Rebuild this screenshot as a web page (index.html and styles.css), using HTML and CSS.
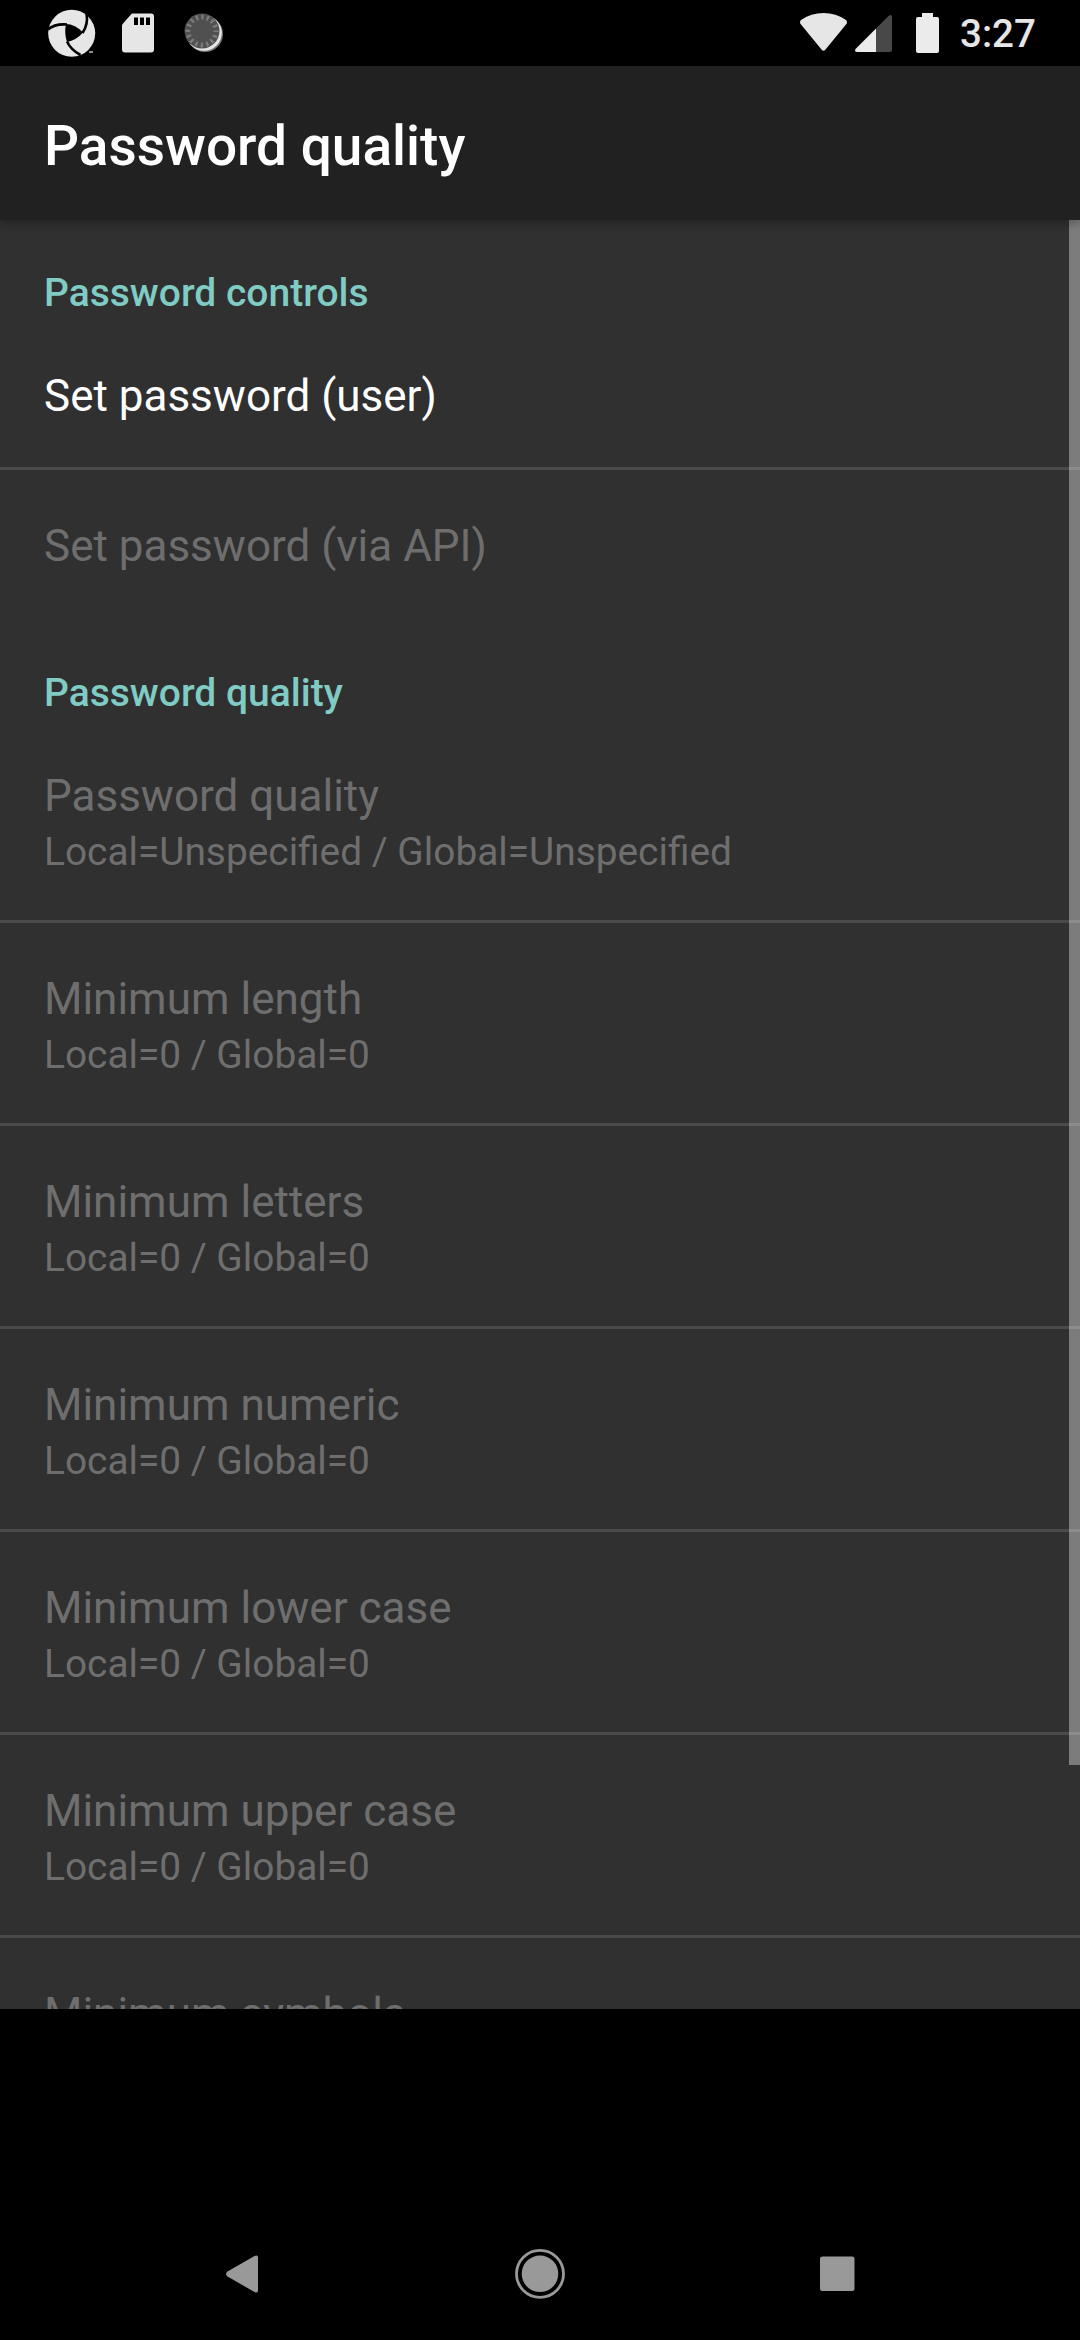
FILE: index.html
```html
<!DOCTYPE html>
<html lang="en">
<head>
<meta charset="utf-8">
<title>Password quality</title>
<link rel="stylesheet" href="styles.css">
</head>
<body>
<div class="screen">
  <header class="status-bar">
    <svg class="notifications" width="190" height="66" viewBox="0 0 190 66" aria-hidden="true">
      <circle cx="31.7" cy="33.3" r="23.5" fill="#e6e6e6"/>
      <path d="M26 24Q35 24 43 32.5Q36 40.500 27 42Q24 33 26 24Z" fill="#000"/>
      <path d="M8 29.500Q15 23.500 27 24.500M46.500 13.500Q48.500 24 42.500 33M27 41.500Q31 50 40.500 55" fill="none" stroke="#000" stroke-width="2.6"/>
      <path d="M43.500 55l8-2v2z" fill="#000"/><path d="M49 52h4" stroke="#bbb" stroke-width="1.500"/>
      <path d="M92 13.500h19a3 3 0 0 1 3 3v33a3 3 0 0 1-3 3H85a3 3 0 0 1-3-3V25.500a3 3 0 0 1 1-2l8-9a3 3 0 0 1 1-1z" fill="#e6e6e6"/>
      <path d="M94 17.500h4V25h-4zM100 17.500h4V25h-4zM106 17.500h4V25h-4z" fill="#000"/>
      <circle cx="165" cy="34" r="18" fill="#777"/>
      <circle cx="164" cy="33" r="17.800" fill="#e6e6e6"/>
      <circle cx="162" cy="31" r="17.500" fill="#505050"/>
      <circle cx="162" cy="31" r="14" fill="none" stroke="#7d7d7d" stroke-width="5" stroke-dasharray="2.2 3.298" stroke-dashoffset="1.1"/>
    </svg>
    <div class="system">
      <svg width="140" height="66" viewBox="800 0 140 66" aria-hidden="true">
        <path d="M801 20Q811 13 823.500 13T846 20Q848 22 846 24.500L825.500 49.500Q823.500 52 821.500 49.500L801 24.500Q799 22 801 20Z" fill="#e6e6e6"/>
        <path d="M876 28.500L888.500 16Q892 13.500 892 17V49.500Q892 52 889.500 52H876Z" fill="#484848"/>
        <path d="M876 28.500V52H857Q853.500 51.500 856 48.500Z" fill="#ebebeb"/>
        <path d="M922 13h11v4h4q2 0 2 2v32q0 2-2 2h-19q-2 0-2-2V19q0-2 2-2h4z" fill="#ebebeb"/>
      </svg>
      <span class="clock">3:27</span>
    </div>
  </header>
  <div class="app-bar"><h1>Password quality</h1></div>
  <main class="settings">
    <h2>Password controls</h2>
    <div class="row enabled"><p class="title">Set password (user)</p></div>
    <div class="row last"><p class="title">Set password (via API)</p></div>
    <h2>Password quality</h2>
    <div class="row"><p class="title">Password quality</p><p class="summary">Local=Unspecified / Global=Unspecified</p></div>
    <div class="row"><p class="title">Minimum length</p><p class="summary">Local=0 / Global=0</p></div>
    <div class="row"><p class="title">Minimum letters</p><p class="summary">Local=0 / Global=0</p></div>
    <div class="row"><p class="title">Minimum numeric</p><p class="summary">Local=0 / Global=0</p></div>
    <div class="row"><p class="title">Minimum lower case</p><p class="summary">Local=0 / Global=0</p></div>
    <div class="row"><p class="title">Minimum upper case</p><p class="summary">Local=0 / Global=0</p></div>
    <div class="row"><p class="title">Minimum symbols</p></div>
    <div class="scrollbar"></div>
  </main>
  <nav class="nav-bar">
    <svg width="132" height="132" viewBox="0 0 132 132" aria-label="Back"><path d="M50.500 63.500L77.500 48Q81 46.500 81 49.500V82.500Q81 85.500 77.500 84L50.500 68.500Q47.500 66 50.500 63.500Z" fill="#999"/></svg>
    <svg width="132" height="132" viewBox="0 0 132 132" aria-label="Home"><circle cx="66" cy="65.800" r="23.500" fill="none" stroke="#999" stroke-width="2.800"/><circle cx="66" cy="65.800" r="18.300" fill="#999"/></svg>
    <svg width="132" height="132" viewBox="0 0 132 132" aria-label="Recents"><rect x="49" y="48.500" width="34.500" height="34.500" rx="2.500" fill="#999"/></svg>
  </nav>
</div>
</body>
</html>
```
FILE: styles.css
```css
* {
  box-sizing: border-box;
}

body {
  margin: 0;
  background: #000;
  font-family: Roboto, sans-serif;
}

h1, h2, p {
  margin: 0;
  white-space: nowrap;
}

.screen {
  display: flex;
  flex-direction: column;
  width: 1080px;
  height: 2340px;
  overflow: hidden;
}

.status-bar {
  display: flex;
  flex: none;
  justify-content: space-between;
  height: 66px;
  padding: 0 44px 0 40px;
}

.status-bar svg {
  display: block;
}

.system {
  display: flex;
  gap: 20px;
}

.clock {
  width: 76px;
  color: #e6e6e6;
  font-size: 38.5px;
  font-weight: 500;
  line-height: 68px;
}

.app-bar {
  position: relative;
  z-index: 1;
  flex: none;
  height: 154px;
  padding: 47px 44px 0;
  background: #212121;
  box-shadow: 0 3px 9px rgba(0, 0, 0, 0.3);
}

h1 {
  color: #fff;
  font-size: 55px;
  font-weight: 500;
  line-height: 66px;
}

.settings {
  position: relative;
  flex: none;
  height: 1789px;
  overflow: hidden;
  background: #303030;
}

h2 {
  height: 100px;
  padding: 47px 44px 0;
  color: #80cbc4;
  font-size: 39px;
  font-weight: 500;
  line-height: 53px;
}

.row {
  padding: 47px 44px 0;
  height: 203px;
  border-bottom: 3px solid #4a4a4a;
  color: #6e6e6e;
}

.row.enabled,
.row.last {
  height: 150px;
}

.row.enabled {
  color: #fff;
}

.row.last {
  border-color: transparent;
}

.title {
  font-size: 44px;
  line-height: 59px;
}

.summary {
  font-size: 38.85px;
  line-height: 51px;
}

.scrollbar {
  position: absolute;
  top: 0;
  right: 0;
  width: 11px;
  height: 1545px;
  background: rgba(255, 255, 255, 0.37);
}

.nav-bar {
  display: flex;
  justify-content: space-between;
  flex: none;
  height: 132px;
  margin-top: auto;
  padding: 0 177px;
}
```
